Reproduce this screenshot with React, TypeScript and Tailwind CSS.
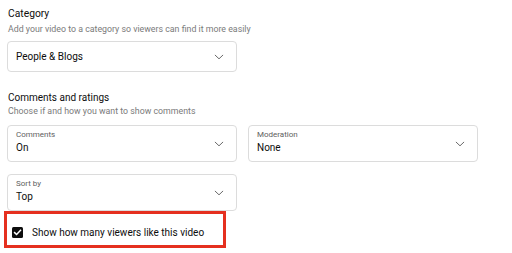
import React from "react";

function Chevron() {
  return (
    <svg width="10" height="6" viewBox="0 0 10 6" fill="none" className="shrink-0">
      <path d="M1.2 1.2 L5 4.8 L8.8 1.2" stroke="#6a6a6a" strokeWidth="1" strokeLinecap="round" strokeLinejoin="round" />
    </svg>
  );
}

function LabeledSelect({ label, value }: { label: string; value: string }) {
  return (
    <div className="w-[230px] h-[37px] border border-[#dcdcdc] rounded-[4px] flex items-center pl-[8px] pr-[12px] bg-white">
      <div className="flex-1 flex flex-col self-start pt-[4px]">
        <span className="text-[8px] leading-[10px] text-[#606060]">{label}</span>
        <span className="text-[10px] leading-[13px] text-[#0d0d0d] mt-[1px]">{value}</span>
      </div>
      <Chevron />
    </div>
  );
}

export default function App() {
  return (
    <div
      className="w-[512px] h-[253px] bg-white overflow-hidden pl-[7px] pt-[7px]"
      style={{ fontFamily: "Roboto, 'Noto Sans', Arial, sans-serif" }}
    >
      <div className="text-[10.3px] leading-[14px] text-[#0d0d0d] pl-[1px]">Category</div>
      <div className="text-[8.8px] leading-[12px] text-[#7a7a7a] mt-[2px] pl-[1px]">
        Add your video to a category so viewers can find it more easily
      </div>
      <div className="mt-[6px] w-[230px] h-[31px] border border-[#dcdcdc] rounded-[4px] flex items-center pl-[8px] pr-[12px]">
        <span className="flex-1 text-[10px] leading-[13px] text-[#0d0d0d]">People &amp; Blogs</span>
        <Chevron />
      </div>

      <div className="mt-[19px] text-[10px] leading-[14px] text-[#0d0d0d] pl-[1px]">Comments and ratings</div>
      <div className="text-[8.8px] leading-[12px] text-[#7a7a7a] pl-[1px]">
        Choose if and how you want to show comments
      </div>
      <div className="mt-[8px] flex gap-[11px]">
        <LabeledSelect label="Comments" value="On" />
        <LabeledSelect label="Moderation" value="None" />
      </div>
      <div className="mt-[12px]">
        <LabeledSelect label="Sort by" value="Top" />
      </div>
      <div className="-ml-[3px] w-[222px] h-[37px] border-[3px] border-[#e5301f] flex items-center pl-[5px] pt-[5px]">
        <div className="w-[11px] h-[11px] bg-[#0d0d0d] rounded-[1.5px] flex items-center justify-center shrink-0">
          <svg width="9" height="9" viewBox="0 0 9 9" fill="none">
            <path d="M1.6 4.6 L3.6 6.5 L7.5 2.4" stroke="white" strokeWidth="1.5" strokeLinecap="square" />
          </svg>
        </div>
        <span className="ml-[9px] text-[10px] leading-[13px] text-[#0d0d0d]">Show how many viewers like this video</span>
      </div>
    </div>
  );
}
